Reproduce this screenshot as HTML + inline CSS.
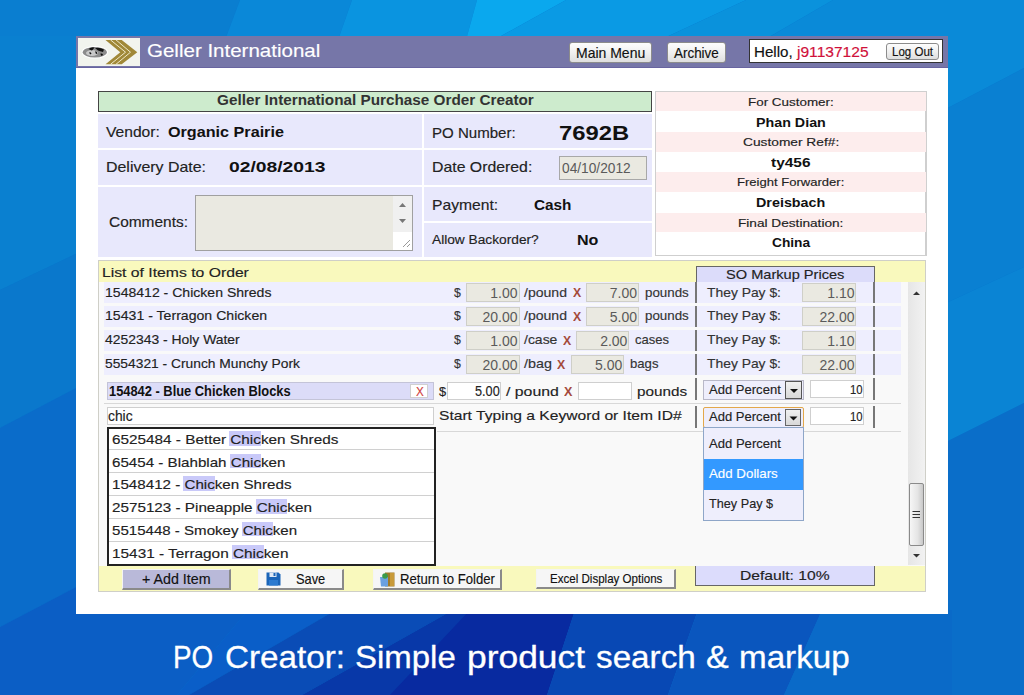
<!DOCTYPE html>
<html><head><meta charset="utf-8"><style>
html,body{margin:0;padding:0;}
body{width:1024px;height:695px;position:relative;overflow:hidden;background:#0a74cc;font-family:"Liberation Sans",sans-serif;}
div,span,svg{position:absolute;}
span{white-space:nowrap;line-height:1;transform-origin:0 0;}
</style></head><body>
<svg width="1024" height="695" style="position:absolute;left:0;top:0">
<defs>
<linearGradient id="gb" x1="0" y1="0" x2="0" y2="1">
<stop offset="0" stop-color="#ffffff" stop-opacity="0"/><stop offset="1" stop-color="#000030" stop-opacity="0.18"/>
</linearGradient>
</defs>
<rect width="1024" height="695" fill="#0a74cc"/>
<polygon points="0,0 240,0 225,40 0,40" fill="#0a7ed0"/>
<polygon points="240,0 352,0 338,40 225,40" fill="#0a88d8"/>
<polygon points="352,0 477,0 466,40 338,40" fill="#0a94e0"/>
<polygon points="477,0 566,0 494,40 466,40" fill="#0aa8ee"/>
<polygon points="566,0 746,0 660,40 494,40" fill="#0a9ae4"/>
<polygon points="746,0 833,0 764,40 660,40" fill="#0a92dc"/>
<polygon points="833,0 1024,0 1024,40 764,40" fill="#0a8ad8"/>
<polygon points="0,36 80,36 80,252 0,290" fill="#0a80d0"/>
<polygon points="0,290 80,252 80,386 0,428" fill="#0a78cc"/>
<polygon points="0,428 80,386 80,585 0,627" fill="#0a6cca"/>
<polygon points="0,627 80,585 80,695 0,695" fill="#0b5ec5"/>
<polygon points="944,36 1024,36 1024,68 944,110" fill="#0a8ad8"/>
<polygon points="944,110 1024,68 1024,267 944,304" fill="#0a80d2"/>
<polygon points="944,304 1024,267 1024,403 944,443" fill="#0a84d4"/>
<polygon points="944,443 1024,403 1024,695 944,695" fill="#0a6ec9"/>
<polygon points="72,610 248,610 177,695 72,695" fill="#0b5ec5"/>
<polygon points="248,610 336,610 189,695 177,695" fill="#0a5ec8"/>
<polygon points="336,610 453,610 302,695 189,695" fill="#0a4cb6"/>
<polygon points="453,610 575,610 547,695 302,695" fill="#0838a8"/>
<polygon points="470,610 575,610 547,695 390,695" fill="#082aa0"/>
<polygon points="575,610 698,610 668,695 547,695" fill="#0848b4"/>
<polygon points="698,610 822,610 784,695 668,695" fill="#0a56be"/>
<polygon points="822,610 952,610 952,695 784,695" fill="#0a6ac8"/>
</svg>
<div style="left:76.00px;top:36.00px;width:872.00px;height:578.00px;background:#fff"></div>
<div style="left:76.00px;top:36.00px;width:872.00px;height:31.50px;background:#7676a8;border-bottom:1.5px solid #6864a0;box-sizing:border-box;"></div>
<div style="left:78.00px;top:38.00px;width:62.00px;height:28.00px;background:#f2f4ee"></div>
<svg style="position:absolute;left:78px;top:38px" width="62" height="28" viewBox="0 0 62 28">
<ellipse cx="16.8" cy="14.2" rx="13.2" ry="6.3" fill="#ffffff"/>
<ellipse cx="16.8" cy="14.2" rx="12.1" ry="5.2" fill="#8c8c8c"/>
<ellipse cx="14" cy="15" rx="6" ry="3" fill="#c8c8c8"/>
<path d="M10.5,11 q3,-2.5 6,-1.5 l-1.5,2 q-1,1.5 -2.5,0.5z M17,10 q5,-1 9,1.5 l-1,2.5 q-3,-1 -5,-1.5z M11.5,14 q1.5,0 2,1.5 l-1,1 q-1.5,-1 -1,-2.5z M17.5,13 q1.5,0.5 2,2.5 l-1.5,0.5 q-1,-1.5 -0.5,-3z M22.5,15.5 q1.5,-0.5 2.5,1 l-1,1.5 q-1.5,-0.5 -1.5,-2.5z" fill="#111"/>
<polygon points="27.5,1.9 43.7,1.9 59.3,14.2 43.7,26.3 27.5,26.3 42.3,14.2" fill="#a08838"/>
<polyline points="32.5,1.9 47.5,14.2 32.5,26.3" fill="none" stroke="#efe9c8" stroke-width="1"/>
<polyline points="38,1.9 52.5,14.2 38,26.3" fill="none" stroke="#efe9c8" stroke-width="1"/>
</svg>
<span style="left:147.40px;top:41.77px;font-size:18.50px;color:#fff;transform:scaleX(1.1087);-webkit-text-stroke:0.15px currentColor;">Geller International</span>
<div style="left:569.00px;top:42.00px;width:83.00px;height:21.00px;border:1px solid #8c8c8c;border-radius:3px;background:linear-gradient(#fdfdfd,#f0f0f0 50%,#dedede);box-sizing:border-box;"></div>
<span style="left:575.60px;top:45.68px;font-size:14.50px;color:#111;transform:scaleX(0.9647);-webkit-text-stroke:0.15px currentColor;">Main Menu</span>
<div style="left:667.00px;top:42.00px;width:59.00px;height:21.00px;border:1px solid #8c8c8c;border-radius:3px;background:linear-gradient(#fdfdfd,#f0f0f0 50%,#dedede);box-sizing:border-box;"></div>
<span style="left:674.40px;top:45.68px;font-size:14.50px;color:#111;transform:scaleX(0.9264);-webkit-text-stroke:0.15px currentColor;">Archive</span>
<div style="left:749.00px;top:39.00px;width:194.00px;height:24.00px;background:#fff;border:1px solid #333;box-sizing:border-box;"></div>
<span style="left:753.80px;top:45.00px;font-size:14.00px;color:#111;transform:scaleX(1.0811);-webkit-text-stroke:0.15px currentColor;">Hello,</span>
<span style="left:797.39px;top:45.00px;font-size:14.00px;color:#d0103a;transform:scaleX(1.1127);-webkit-text-stroke:0.15px currentColor;">j91137125</span>
<div style="left:886.00px;top:43.00px;width:53.00px;height:17.00px;border:1px solid #8c8c8c;border-radius:3px;background:linear-gradient(#fdfdfd,#f0f0f0 50%,#dedede);box-sizing:border-box;"></div>
<span style="left:892.00px;top:46.10px;font-size:12.00px;color:#111;transform:scaleX(0.9603);-webkit-text-stroke:0.15px currentColor;">Log Out</span>
<div style="left:98.00px;top:90.50px;width:554.00px;height:21.50px;background:#cdebcd;border:1px solid #444;box-sizing:border-box;"></div>
<span style="left:216.50px;top:93.40px;font-size:14.00px;font-weight:bold;color:#333;transform:scaleX(1.0916);">Geller International Purchase Order Creator</span>
<div style="left:98.00px;top:114.00px;width:324.00px;height:34.00px;background:#e8e8fc;"></div>
<div style="left:98.00px;top:150.00px;width:324.00px;height:35.00px;background:#e8e8fc;"></div>
<div style="left:98.00px;top:187.00px;width:324.00px;height:70.00px;background:#e8e8fc;"></div>
<div style="left:424.00px;top:114.00px;width:228.00px;height:34.00px;background:#e8e8fc;"></div>
<div style="left:424.00px;top:150.00px;width:228.00px;height:35.00px;background:#e8e8fc;"></div>
<div style="left:424.00px;top:187.00px;width:228.00px;height:34.00px;background:#e8e8fc;"></div>
<div style="left:424.00px;top:223.00px;width:228.00px;height:34.00px;background:#e8e8fc;"></div>
<span style="left:106.20px;top:124.63px;font-size:14.20px;color:#222;transform:scaleX(1.1012);-webkit-text-stroke:0.15px currentColor;">Vendor:</span>
<span style="left:168.30px;top:124.63px;font-size:14.20px;font-weight:bold;color:#111;transform:scaleX(1.1393);">Organic Prairie</span>
<span style="left:106.20px;top:160.43px;font-size:14.20px;color:#222;transform:scaleX(1.1225);-webkit-text-stroke:0.15px currentColor;">Delivery Date:</span>
<span style="left:229.20px;top:160.43px;font-size:14.20px;font-weight:bold;color:#111;transform:scaleX(1.3592);">02/08/2013</span>
<span style="left:109.00px;top:214.53px;font-size:14.20px;color:#222;transform:scaleX(1.0883);-webkit-text-stroke:0.15px currentColor;">Comments:</span>
<div style="left:195.00px;top:195.00px;width:218.00px;height:56.00px;background:#eae9e1;border:1px solid #a0a0a0;box-sizing:border-box;"></div>
<div style="left:393.00px;top:196.00px;width:19.00px;height:36.00px;background:#f0f0f0;"></div>
<div style="left:393.00px;top:232.00px;width:19.00px;height:18.00px;background:#fff;"></div>
<svg style="position:absolute;left:393px;top:196px" width="19" height="54"><polygon points="6,11 13,11 9.5,7" fill="#777"/><polygon points="6,23 13,23 9.5,27" fill="#777"/><line x1="17" y1="44" x2="10" y2="51" stroke="#999" stroke-width="1"/><line x1="17" y1="48" x2="14" y2="51" stroke="#999" stroke-width="1"/></svg>
<span style="left:431.90px;top:125.93px;font-size:14.20px;color:#222;transform:scaleX(1.0607);-webkit-text-stroke:0.15px currentColor;">PO Number:</span>
<span style="left:558.80px;top:122.60px;font-size:20.00px;font-weight:bold;color:#111;transform:scaleX(1.1893);">7692B</span>
<span style="left:431.90px;top:160.33px;font-size:14.20px;color:#222;transform:scaleX(1.1159);-webkit-text-stroke:0.15px currentColor;">Date Ordered:</span>
<div style="left:559.00px;top:156.00px;width:88.00px;height:24.00px;background:#eae9e1;border:1px solid #a8a8a8;box-sizing:border-box;"></div>
<span style="left:561.50px;top:161.30px;font-size:14.00px;color:#5a5a5a;transform:scaleX(0.9804);-webkit-text-stroke:0;">04/10/2012</span>
<span style="left:431.90px;top:197.93px;font-size:14.20px;color:#222;transform:scaleX(1.1037);-webkit-text-stroke:0.15px currentColor;">Payment:</span>
<span style="left:533.60px;top:197.93px;font-size:14.20px;font-weight:bold;color:#111;transform:scaleX(1.0801);">Cash</span>
<span style="left:431.90px;top:234.18px;font-size:12.50px;color:#222;transform:scaleX(1.0970);-webkit-text-stroke:0.15px currentColor;">Allow Backorder?</span>
<span style="left:577.40px;top:231.82px;font-size:15.50px;font-weight:bold;color:#111;transform:scaleX(1.0357);">No</span>
<div style="left:655.00px;top:90.50px;width:272.00px;height:165.50px;background:#fff;border:1px solid #cfcfcf;border-right-width:2px;box-sizing:border-box;"></div>
<div style="left:656.00px;top:92.00px;width:270.00px;height:19.00px;background:#fdeded;"></div>
<div style="left:656.00px;top:131.70px;width:270.00px;height:20.30px;background:#fdeded;"></div>
<div style="left:656.00px;top:172.10px;width:270.00px;height:19.50px;background:#fdeded;"></div>
<div style="left:656.00px;top:212.70px;width:270.00px;height:19.30px;background:#fdeded;"></div>
<span style="left:748.30px;top:96.85px;font-size:11.00px;color:#222;transform:scaleX(1.2192);-webkit-text-stroke:0.15px currentColor;">For Customer:</span>
<span style="left:756.20px;top:115.75px;font-size:13.00px;font-weight:bold;color:#111;transform:scaleX(1.0980);">Phan Dian</span>
<span style="left:743.00px;top:137.25px;font-size:11.00px;color:#222;transform:scaleX(1.2490);-webkit-text-stroke:0.15px currentColor;">Customer Ref#:</span>
<span style="left:770.70px;top:155.85px;font-size:13.00px;font-weight:bold;color:#111;transform:scaleX(1.1878);">ty456</span>
<span style="left:737.20px;top:177.35px;font-size:11.00px;color:#222;transform:scaleX(1.1860);-webkit-text-stroke:0.15px currentColor;">Freight Forwarder:</span>
<span style="left:756.20px;top:196.25px;font-size:13.00px;font-weight:bold;color:#111;transform:scaleX(1.1025);">Dreisbach</span>
<span style="left:738.30px;top:217.75px;font-size:11.00px;color:#222;transform:scaleX(1.2402);-webkit-text-stroke:0.15px currentColor;">Final Destination:</span>
<span style="left:772.00px;top:236.35px;font-size:13.00px;font-weight:bold;color:#111;transform:scaleX(1.0551);">China</span>
<div style="left:98.00px;top:259.50px;width:828.00px;height:332.00px;background:#f9f9f9;border:1px solid #cfcfc8;box-sizing:border-box;"></div>
<div style="left:99.00px;top:260.50px;width:826.00px;height:21.80px;background:#f9f9bd;"></div>
<span style="left:102.20px;top:265.88px;font-size:13.20px;color:#222;transform:scaleX(1.1928);-webkit-text-stroke:0.15px currentColor;">List of Items to Order</span>
<div style="left:696.00px;top:265.50px;width:179.00px;height:17.50px;background:#dcdcfa;border:1px solid #666;border-bottom:none;box-sizing:border-box;"></div>
<span style="left:726.30px;top:267.52px;font-size:13.50px;color:#222;transform:scaleX(1.0810);-webkit-text-stroke:0.15px currentColor;">SO Markup Prices</span>
<div style="left:908.00px;top:282.30px;width:17.00px;height:283.20px;background:linear-gradient(90deg,#e6e6e6,#f2f2f2);"></div>
<div style="left:908.50px;top:483.00px;width:15.50px;height:63.00px;background:linear-gradient(90deg,#f6f6f6,#e4e4e4 60%,#c8c8c8);border:1px solid #8a8a8a;border-radius:2px;box-sizing:border-box;"></div>
<svg style="position:absolute;left:908px;top:282px" width="17" height="284"><polygon points="5,13 12,13 8.5,9.5" fill="#333"/><polygon points="5,272 12,272 8.5,275.5" fill="#333"/><line x1="4.5" y1="229.5" x2="12" y2="229.5" stroke="#333"/><line x1="4.5" y1="232.5" x2="12" y2="232.5" stroke="#333"/><line x1="4.5" y1="235.5" x2="12" y2="235.5" stroke="#333"/></svg>
<div style="left:104.00px;top:282.30px;width:797.00px;height:20.80px;background:#eeeefe;"></div>
<div style="left:695.00px;top:282.30px;width:2.00px;height:20.80px;background:#777;"></div>
<div style="left:873.00px;top:282.30px;width:2.00px;height:20.80px;background:#777;"></div>
<span style="left:105.00px;top:286.89px;font-size:12.60px;color:#222;transform:scaleX(1.1160);-webkit-text-stroke:0.15px currentColor;">1548412 - Chicken Shreds</span>
<span style="left:453.70px;top:286.89px;font-size:12.60px;color:#333;transform:scaleX(0.9707);-webkit-text-stroke:0.15px currentColor;">$</span>
<div style="left:466.00px;top:282.80px;width:53.50px;height:19.00px;background:#eae9e1;border:1px solid #cfcfc8;box-sizing:border-box;"></div>
<span style="left:490.26px;top:286.20px;font-size:14.00px;color:#5a5a5a;-webkit-text-stroke:0;">1.00</span>
<span style="left:524.20px;top:286.89px;font-size:12.60px;color:#333;transform:scaleX(1.1156);-webkit-text-stroke:0.15px currentColor;">/pound</span>
<span style="left:572.60px;top:286.97px;font-size:12.50px;font-weight:bold;color:#a44a3c;transform:scaleX(0.9835);">X</span>
<div style="left:585.50px;top:282.80px;width:53.50px;height:19.00px;background:#eae9e1;border:1px solid #cfcfc8;box-sizing:border-box;"></div>
<span style="left:609.76px;top:286.20px;font-size:14.00px;color:#5a5a5a;-webkit-text-stroke:0;">7.00</span>
<span style="left:644.50px;top:286.89px;font-size:12.60px;color:#333;transform:scaleX(1.0595);-webkit-text-stroke:0.15px currentColor;">pounds</span>
<span style="left:706.50px;top:286.89px;font-size:12.60px;color:#333;transform:scaleX(1.1006);-webkit-text-stroke:0.15px currentColor;">They Pay $:</span>
<div style="left:802.40px;top:282.80px;width:54.10px;height:19.00px;background:#eae9e1;border:1px solid #cfcfc8;box-sizing:border-box;"></div>
<span style="left:827.26px;top:286.20px;font-size:14.00px;color:#5a5a5a;-webkit-text-stroke:0;">1.10</span>
<div style="left:104.00px;top:305.80px;width:797.00px;height:21.30px;background:#eeeefe;"></div>
<div style="left:695.00px;top:305.80px;width:2.00px;height:21.30px;background:#777;"></div>
<div style="left:873.00px;top:305.80px;width:2.00px;height:21.30px;background:#777;"></div>
<span style="left:105.00px;top:310.49px;font-size:12.60px;color:#222;transform:scaleX(1.1205);-webkit-text-stroke:0.15px currentColor;">15431 - Terragon Chicken</span>
<span style="left:453.70px;top:310.49px;font-size:12.60px;color:#333;transform:scaleX(0.9707);-webkit-text-stroke:0.15px currentColor;">$</span>
<div style="left:466.00px;top:306.80px;width:53.50px;height:19.00px;background:#eae9e1;border:1px solid #cfcfc8;box-sizing:border-box;"></div>
<span style="left:482.47px;top:309.80px;font-size:14.00px;color:#5a5a5a;-webkit-text-stroke:0;">20.00</span>
<span style="left:524.20px;top:310.49px;font-size:12.60px;color:#333;transform:scaleX(1.1156);-webkit-text-stroke:0.15px currentColor;">/pound</span>
<span style="left:572.60px;top:310.57px;font-size:12.50px;font-weight:bold;color:#a44a3c;transform:scaleX(0.9835);">X</span>
<div style="left:585.50px;top:306.80px;width:53.50px;height:19.00px;background:#eae9e1;border:1px solid #cfcfc8;box-sizing:border-box;"></div>
<span style="left:609.76px;top:309.80px;font-size:14.00px;color:#5a5a5a;-webkit-text-stroke:0;">5.00</span>
<span style="left:644.50px;top:310.49px;font-size:12.60px;color:#333;transform:scaleX(1.0595);-webkit-text-stroke:0.15px currentColor;">pounds</span>
<span style="left:706.50px;top:310.49px;font-size:12.60px;color:#333;transform:scaleX(1.1006);-webkit-text-stroke:0.15px currentColor;">They Pay $:</span>
<div style="left:802.40px;top:306.80px;width:54.10px;height:19.00px;background:#eae9e1;border:1px solid #cfcfc8;box-sizing:border-box;"></div>
<span style="left:819.47px;top:309.80px;font-size:14.00px;color:#5a5a5a;-webkit-text-stroke:0;">22.00</span>
<div style="left:104.00px;top:329.80px;width:797.00px;height:21.30px;background:#eeeefe;"></div>
<div style="left:695.00px;top:329.80px;width:2.00px;height:21.30px;background:#777;"></div>
<div style="left:873.00px;top:329.80px;width:2.00px;height:21.30px;background:#777;"></div>
<span style="left:105.00px;top:334.49px;font-size:12.60px;color:#222;transform:scaleX(1.1041);-webkit-text-stroke:0.15px currentColor;">4252343 - Holy Water</span>
<span style="left:453.70px;top:334.49px;font-size:12.60px;color:#333;transform:scaleX(0.9707);-webkit-text-stroke:0.15px currentColor;">$</span>
<div style="left:466.00px;top:330.80px;width:53.50px;height:19.00px;background:#eae9e1;border:1px solid #cfcfc8;box-sizing:border-box;"></div>
<span style="left:490.26px;top:333.80px;font-size:14.00px;color:#5a5a5a;-webkit-text-stroke:0;">1.00</span>
<span style="left:524.20px;top:334.49px;font-size:12.60px;color:#333;transform:scaleX(1.1091);-webkit-text-stroke:0.15px currentColor;">/case</span>
<span style="left:562.50px;top:334.57px;font-size:12.50px;font-weight:bold;color:#a44a3c;transform:scaleX(0.9835);">X</span>
<div style="left:575.90px;top:330.80px;width:53.50px;height:19.00px;background:#eae9e1;border:1px solid #cfcfc8;box-sizing:border-box;"></div>
<span style="left:600.16px;top:333.80px;font-size:14.00px;color:#5a5a5a;-webkit-text-stroke:0;">2.00</span>
<span style="left:634.90px;top:334.49px;font-size:12.60px;color:#333;transform:scaleX(1.0331);-webkit-text-stroke:0.15px currentColor;">cases</span>
<span style="left:706.50px;top:334.49px;font-size:12.60px;color:#333;transform:scaleX(1.1006);-webkit-text-stroke:0.15px currentColor;">They Pay $:</span>
<div style="left:802.40px;top:330.80px;width:54.10px;height:19.00px;background:#eae9e1;border:1px solid #cfcfc8;box-sizing:border-box;"></div>
<span style="left:827.26px;top:333.80px;font-size:14.00px;color:#5a5a5a;-webkit-text-stroke:0;">1.10</span>
<div style="left:104.00px;top:353.80px;width:797.00px;height:21.30px;background:#eeeefe;"></div>
<div style="left:695.00px;top:353.80px;width:2.00px;height:21.30px;background:#777;"></div>
<div style="left:873.00px;top:353.80px;width:2.00px;height:21.30px;background:#777;"></div>
<span style="left:105.00px;top:358.49px;font-size:12.60px;color:#222;transform:scaleX(1.0960);-webkit-text-stroke:0.15px currentColor;">5554321 - Crunch Munchy Pork</span>
<span style="left:453.70px;top:358.49px;font-size:12.60px;color:#333;transform:scaleX(0.9707);-webkit-text-stroke:0.15px currentColor;">$</span>
<div style="left:466.00px;top:354.80px;width:53.50px;height:19.00px;background:#eae9e1;border:1px solid #cfcfc8;box-sizing:border-box;"></div>
<span style="left:482.47px;top:357.80px;font-size:14.00px;color:#5a5a5a;-webkit-text-stroke:0;">20.00</span>
<span style="left:524.20px;top:358.49px;font-size:12.60px;color:#333;transform:scaleX(1.1379);-webkit-text-stroke:0.15px currentColor;">/bag</span>
<span style="left:557.00px;top:358.57px;font-size:12.50px;font-weight:bold;color:#a44a3c;transform:scaleX(0.9835);">X</span>
<div style="left:570.70px;top:354.80px;width:53.50px;height:19.00px;background:#eae9e1;border:1px solid #cfcfc8;box-sizing:border-box;"></div>
<span style="left:594.96px;top:357.80px;font-size:14.00px;color:#5a5a5a;-webkit-text-stroke:0;">5.00</span>
<span style="left:629.70px;top:358.49px;font-size:12.60px;color:#333;transform:scaleX(1.0433);-webkit-text-stroke:0.15px currentColor;">bags</span>
<span style="left:706.50px;top:358.49px;font-size:12.60px;color:#333;transform:scaleX(1.1006);-webkit-text-stroke:0.15px currentColor;">They Pay $:</span>
<div style="left:802.40px;top:354.80px;width:54.10px;height:19.00px;background:#eae9e1;border:1px solid #cfcfc8;box-sizing:border-box;"></div>
<span style="left:819.47px;top:357.80px;font-size:14.00px;color:#5a5a5a;-webkit-text-stroke:0;">22.00</span>
<div style="left:695.00px;top:378.00px;width:2.00px;height:22.00px;background:#777;"></div>
<div style="left:873.00px;top:378.00px;width:2.00px;height:22.00px;background:#777;"></div>
<div style="left:107.00px;top:382.30px;width:326.50px;height:17.70px;background:#dcdcf8;border:1px solid #c4c4d8;box-sizing:border-box;"></div>
<span style="left:108.50px;top:383.85px;font-size:14.30px;font-weight:bold;color:#111;transform:scaleX(0.9000);">154842 - Blue Chicken Blocks</span>
<div style="left:410.20px;top:384.30px;width:17.80px;height:13.50px;background:#fff;border:1px solid #d0d0d0;box-sizing:border-box;"></div>
<span style="left:415.50px;top:385.15px;font-size:13.00px;color:#d04040;transform:scaleX(0.8996);-webkit-text-stroke:0.15px currentColor;">X</span>
<span style="left:439.20px;top:384.82px;font-size:13.50px;color:#222;transform:scaleX(0.9459);-webkit-text-stroke:0.15px currentColor;">$</span>
<div style="left:447.00px;top:382.00px;width:54.00px;height:18.00px;background:#fff;border:1px solid #cfcfcf;box-sizing:border-box;"></div>
<span style="left:474.80px;top:384.40px;font-size:14.00px;color:#222;transform:scaleX(0.9066);-webkit-text-stroke:0.15px currentColor;">5.00</span>
<span style="left:505.90px;top:384.82px;font-size:13.50px;color:#222;transform:scaleX(1.1724);-webkit-text-stroke:0.15px currentColor;">/ pound</span>
<span style="left:564.00px;top:385.67px;font-size:12.50px;font-weight:bold;color:#a44a3c;transform:scaleX(1.0075);">X</span>
<div style="left:577.60px;top:382.00px;width:54.40px;height:18.00px;background:#fff;border:1px solid #cfcfcf;box-sizing:border-box;"></div>
<span style="left:637.00px;top:384.82px;font-size:13.50px;color:#222;transform:scaleX(1.1311);-webkit-text-stroke:0.15px currentColor;">pounds</span>
<div style="left:703.00px;top:380.00px;width:100.50px;height:19.50px;background:#eeeefc;border:1px solid #b8b8c8;box-sizing:border-box;"></div>
<div style="left:785.30px;top:381.00px;width:17.20px;height:17.50px;background:linear-gradient(#f0f0f0,#d8d8d8);border:1px solid #555;box-sizing:border-box;"></div>
<svg style="position:absolute;left:785px;top:381px" width="18" height="18"><polygon points="5,8 13,8 9,12" fill="#111"/></svg>
<span style="left:708.50px;top:383.01px;font-size:13.40px;color:#222;transform:scaleX(0.9737);-webkit-text-stroke:0.15px currentColor;">Add Percent</span>
<div style="left:810.30px;top:380.00px;width:53.70px;height:17.80px;background:#fff;border:1px solid #cfcfcf;box-sizing:border-box;"></div>
<span style="left:849.50px;top:383.01px;font-size:13.40px;color:#222;transform:scaleX(0.8456);-webkit-text-stroke:0.15px currentColor;">10</span>
<div style="left:104.00px;top:403.00px;width:797.00px;height:1.20px;background:#d8d8d8;"></div>
<div style="left:695.00px;top:406.00px;width:2.00px;height:22.00px;background:#777;"></div>
<div style="left:873.00px;top:406.00px;width:2.00px;height:22.00px;background:#777;"></div>
<div style="left:107.00px;top:407.40px;width:327.00px;height:17.40px;background:#fff;border:1px solid #cfcfcf;box-sizing:border-box;"></div>
<span style="left:108.00px;top:409.00px;font-size:14.00px;color:#222;transform:scaleX(0.9883);-webkit-text-stroke:0.15px currentColor;">chic</span>
<span style="left:439.20px;top:409.12px;font-size:13.50px;color:#222;transform:scaleX(1.1561);-webkit-text-stroke:0.15px currentColor;">Start Typing a Keyword or Item ID#</span>
<div style="left:703.00px;top:407.00px;width:100.50px;height:20.50px;background:#eeeefc;border:1.5px solid #e3a84a;border-radius:2px;box-sizing:border-box;"></div>
<div style="left:785.30px;top:409.00px;width:16.20px;height:16.50px;background:linear-gradient(#f0f0f0,#d8d8d8);border:1px solid #666;box-sizing:border-box;"></div>
<svg style="position:absolute;left:785px;top:409px" width="17" height="17"><polygon points="4.5,7.5 12.5,7.5 8.5,11.5" fill="#111"/></svg>
<span style="left:708.50px;top:410.11px;font-size:13.40px;color:#222;transform:scaleX(0.9737);-webkit-text-stroke:0.15px currentColor;">Add Percent</span>
<div style="left:810.30px;top:407.00px;width:53.70px;height:17.80px;background:#fff;border:1px solid #cfcfcf;box-sizing:border-box;"></div>
<span style="left:849.50px;top:410.11px;font-size:13.40px;color:#222;transform:scaleX(0.8456);-webkit-text-stroke:0.15px currentColor;">10</span>
<div style="left:437.00px;top:431.00px;width:464.00px;height:1.20px;background:#d8d8d8;"></div>
<div style="left:106.50px;top:426.50px;width:329.00px;height:139.50px;background:#fff;border:2px solid #222;box-sizing:border-box;"></div>
<div style="left:229.31px;top:431.10px;width:31.43px;height:14.50px;background:#c9c9f9;"></div>
<span style="left:111.50px;top:432.99px;font-size:13.30px;color:#222;transform:scaleX(1.1512);-webkit-text-stroke:0.15px currentColor;">6525484 - Better Chicken Shreds</span>
<div style="left:109.00px;top:449.00px;width:324.50px;height:1.20px;background:#d0d0d0;"></div>
<div style="left:229.77px;top:453.90px;width:31.11px;height:14.50px;background:#c9c9f9;"></div>
<span style="left:111.50px;top:455.79px;font-size:13.30px;color:#222;transform:scaleX(1.1391);-webkit-text-stroke:0.15px currentColor;">65454 - Blahblah Chicken</span>
<div style="left:109.00px;top:472.00px;width:324.50px;height:1.20px;background:#d0d0d0;"></div>
<div style="left:183.49px;top:476.40px;width:31.13px;height:14.50px;background:#c9c9f9;"></div>
<span style="left:111.50px;top:478.29px;font-size:13.30px;color:#222;transform:scaleX(1.1398);-webkit-text-stroke:0.15px currentColor;">1548412 - Chicken Shreds</span>
<div style="left:109.00px;top:495.00px;width:324.50px;height:1.20px;background:#d0d0d0;"></div>
<div style="left:255.85px;top:499.10px;width:31.28px;height:14.50px;background:#c9c9f9;"></div>
<span style="left:111.50px;top:500.99px;font-size:13.30px;color:#222;transform:scaleX(1.1455);-webkit-text-stroke:0.15px currentColor;">2575123 - Pineapple Chicken</span>
<div style="left:109.00px;top:518.00px;width:324.50px;height:1.20px;background:#d0d0d0;"></div>
<div style="left:241.66px;top:521.80px;width:30.94px;height:14.50px;background:#c9c9f9;"></div>
<span style="left:111.50px;top:523.70px;font-size:13.30px;color:#222;transform:scaleX(1.1329);-webkit-text-stroke:0.15px currentColor;">5515448 - Smokey Chicken</span>
<div style="left:109.00px;top:541.00px;width:324.50px;height:1.20px;background:#d0d0d0;"></div>
<div style="left:232.00px;top:544.80px;width:31.53px;height:14.50px;background:#c9c9f9;"></div>
<span style="left:111.50px;top:546.70px;font-size:13.30px;color:#222;transform:scaleX(1.1551);-webkit-text-stroke:0.15px currentColor;">15431 - Terragon Chicken</span>
<div style="left:703.20px;top:427.00px;width:100.80px;height:93.50px;background:#eeeefc;border:1px solid #8ea6c8;box-sizing:border-box;"></div>
<div style="left:704.20px;top:459.00px;width:98.80px;height:30.50px;background:#3399ff;"></div>
<span style="left:708.50px;top:437.04px;font-size:13.60px;color:#222;transform:scaleX(0.9620);-webkit-text-stroke:0.15px currentColor;">Add Percent</span>
<span style="left:708.50px;top:467.44px;font-size:13.60px;color:#fff;transform:scaleX(0.9787);-webkit-text-stroke:0.15px currentColor;">Add Dollars</span>
<span style="left:708.50px;top:497.44px;font-size:13.60px;color:#222;transform:scaleX(0.9318);-webkit-text-stroke:0.15px currentColor;">They Pay $</span>
<div style="left:99.00px;top:565.50px;width:826.00px;height:25.50px;background:#f9f9bd;"></div>
<div style="left:122.40px;top:569.00px;width:108.20px;height:21.00px;background:#b9b9d9;border-style:solid;border-width:1px 2px 2px 1px;border-color:#f4f4f4 #8a8a8a #8a8a8a #f4f4f4;box-sizing:border-box;"></div>
<span style="left:141.70px;top:572.17px;font-size:14.50px;color:#111;transform:scaleX(0.9838);-webkit-text-stroke:0.15px currentColor;">+ Add Item</span>
<div style="left:257.60px;top:569.00px;width:86.40px;height:20.80px;background:#f6f6f6;border-style:solid;border-width:1px 2px 2px 1px;border-color:#f4f4f4 #8a8a8a #8a8a8a #f4f4f4;box-sizing:border-box;"></div>
<svg style="position:absolute;left:266px;top:572px" width="15" height="14"><path d="M0.5,0.5 h12 l2,2 v11 h-14z" fill="#1a64b8"/><rect x="3.5" y="0.5" width="7" height="4.5" fill="#dfe8f4"/><rect x="7.5" y="1" width="2" height="3" fill="#1a64b8"/><rect x="3" y="8" width="9" height="5.5" fill="#2b7ad0"/></svg>
<span style="left:295.70px;top:572.17px;font-size:14.50px;color:#111;transform:scaleX(0.8836);-webkit-text-stroke:0.15px currentColor;">Save</span>
<div style="left:372.50px;top:569.00px;width:129.50px;height:20.80px;background:#f6f6f6;border-style:solid;border-width:1px 2px 2px 1px;border-color:#f4f4f4 #8a8a8a #8a8a8a #f4f4f4;box-sizing:border-box;"></div>
<svg style="position:absolute;left:379px;top:572px" width="16" height="15"><rect x="6" y="0.5" width="9.5" height="14" fill="#a07a28"/><rect x="11" y="1" width="4" height="13" fill="#c89a3a"/><path d="M1,5 h8 v9.5 h-7z" fill="#6aa0e0"/><circle cx="6" cy="4" r="2.8" fill="#3a9a4a"/></svg>
<span style="left:399.50px;top:572.43px;font-size:14.20px;color:#111;transform:scaleX(0.9258);-webkit-text-stroke:0.15px currentColor;">Return to Folder</span>
<div style="left:535.90px;top:569.00px;width:140.10px;height:20.30px;background:#f6f6f6;border-style:solid;border-width:1px 2px 2px 1px;border-color:#f4f4f4 #8a8a8a #8a8a8a #f4f4f4;box-sizing:border-box;"></div>
<span style="left:549.60px;top:573.43px;font-size:12.20px;color:#111;transform:scaleX(0.9481);-webkit-text-stroke:0.15px currentColor;">Excel Display Options</span>
<div style="left:695.20px;top:565.50px;width:179.80px;height:20.50px;background:#dcdcfc;border:1px solid #666;border-top:none;box-sizing:border-box;"></div>
<span style="left:740.40px;top:568.61px;font-size:13.40px;color:#222;transform:scaleX(1.1691);-webkit-text-stroke:0.15px currentColor;">Default: 10%</span>
<span style="left:173.10px;top:642.27px;font-size:30.50px;color:#fff;transform:scaleX(0.9121);-webkit-text-stroke:0.3px #fff;">PO</span>
<span style="left:225.00px;top:642.27px;font-size:30.50px;color:#fff;transform:scaleX(1.0884);-webkit-text-stroke:0.3px #fff;">Creator:</span>
<span style="left:354.70px;top:642.27px;font-size:30.50px;color:#fff;transform:scaleX(1.0811);-webkit-text-stroke:0.3px #fff;">Simple</span>
<span style="left:467.00px;top:642.27px;font-size:30.50px;color:#fff;transform:scaleX(1.1601);-webkit-text-stroke:0.3px #fff;">product</span>
<span style="left:596.40px;top:642.27px;font-size:30.50px;color:#fff;transform:scaleX(1.0903);-webkit-text-stroke:0.3px #fff;">search</span>
<span style="left:706.30px;top:642.27px;font-size:30.50px;color:#fff;transform:scaleX(1.1158);-webkit-text-stroke:0.3px #fff;">&amp;</span>
<span style="left:738.60px;top:642.27px;font-size:30.50px;color:#fff;transform:scaleX(1.0883);-webkit-text-stroke:0.3px #fff;">markup</span>
</body></html>
